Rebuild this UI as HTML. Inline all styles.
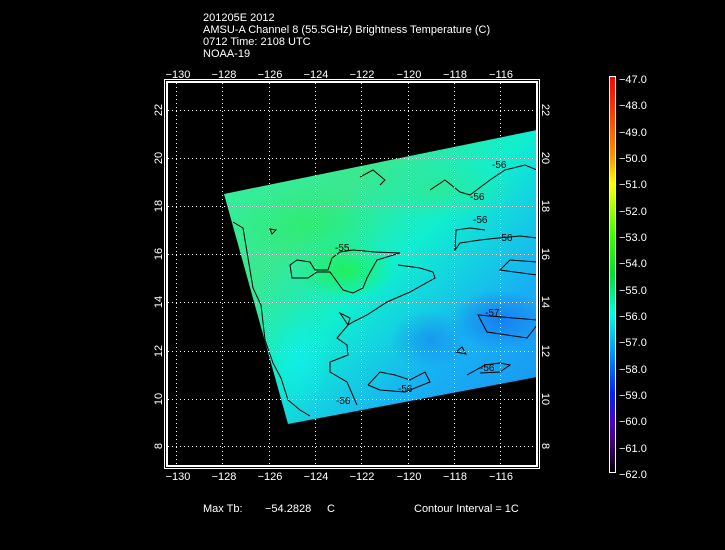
<!DOCTYPE html>
<html><head><style>
html,body{margin:0;padding:0;background:#000;}
body{width:725px;height:550px;overflow:hidden;position:relative;font-family:"Liberation Sans",sans-serif;color:#fff;}
.t{position:absolute;font-size:11px;line-height:12px;white-space:pre;}
</style></head><body>
<div class="t" style="left:203px;top:12px;">201205E 2012
AMSU-A Channel 8 (55.5GHz) Brightness Temperature (C)
0712 Time: 2108 UTC
NOAA-19</div>
<svg width="725" height="550" style="position:absolute;left:0;top:0" xmlns="http://www.w3.org/2000/svg">
<defs>
<linearGradient id="g" x1="0" y1="0" x2="1" y2="1" gradientUnits="objectBoundingBox">
<stop offset="0" stop-color="#30f0a0"/>
<stop offset="0.3" stop-color="#3ae890"/>
<stop offset="0.5" stop-color="#10eed0"/>
<stop offset="0.75" stop-color="#18b0f4"/>
<stop offset="1" stop-color="#1890f0"/>
</linearGradient>
<radialGradient id="r1"><stop offset="0" stop-color="#20f050" stop-opacity="0.9"/><stop offset="1" stop-color="#20f050" stop-opacity="0"/></radialGradient>
<radialGradient id="r2"><stop offset="0" stop-color="#1878f0" stop-opacity="0.9"/><stop offset="1" stop-color="#1878f0" stop-opacity="0"/></radialGradient>
<radialGradient id="r3"><stop offset="0" stop-color="#10f0f0" stop-opacity="0.9"/><stop offset="1" stop-color="#10f0f0" stop-opacity="0"/></radialGradient>
<radialGradient id="r4"><stop offset="0" stop-color="#30e890" stop-opacity="0.9"/><stop offset="1" stop-color="#30e890" stop-opacity="0"/></radialGradient>
<linearGradient id="cb" x1="0" y1="0" x2="0" y2="1">
<stop offset="0" stop-color="#ff0000"/>
<stop offset="0.1" stop-color="#ff4000"/>
<stop offset="0.2" stop-color="#ff9000"/>
<stop offset="0.27" stop-color="#ffff00"/>
<stop offset="0.4" stop-color="#40ff00"/>
<stop offset="0.5" stop-color="#00e030"/>
<stop offset="0.6" stop-color="#00ffe0"/>
<stop offset="0.7" stop-color="#0090ff"/>
<stop offset="0.8" stop-color="#0020ff"/>
<stop offset="0.88" stop-color="#5000c0"/>
<stop offset="0.95" stop-color="#300050"/>
<stop offset="1" stop-color="#000000"/>
</linearGradient>
<clipPath id="cp"><polygon points="224,194 537,130 537,377 288,424"/></clipPath>
</defs>
<polygon points="224,194 537,130 537,377 288,424" fill="url(#g)"/>
<g clip-path="url(#cp)">
<ellipse cx="345" cy="270" rx="50" ry="30" fill="url(#r1)"/>
<ellipse cx="310" cy="225" rx="80" ry="40" fill="url(#r1)" opacity="0.5"/>
<ellipse cx="440" cy="190" rx="80" ry="30" fill="url(#r4)" opacity="0.8"/>
<ellipse cx="500" cy="320" rx="50" ry="30" fill="url(#r2)"/>
<ellipse cx="430" cy="340" rx="40" ry="30" fill="url(#r2)" opacity="0.6"/>
<ellipse cx="300" cy="360" rx="30" ry="50" fill="url(#r3)" opacity="0.7"/>
<g fill="none" stroke="#000" stroke-width="1">
<polyline points="233,222 243,228 253,288 261,305 265,340 273,363 281,378 288,400 300,410 310,416"/>
<polygon points="290,265 297,260 310,262 315,270 328,270 332,258 340,252 353,250 375,252 400,253 377,260 367,278 363,288 353,293 343,290 330,272 317,272 308,278 292,278"/>
<polyline points="398,265 420,268 433,272 435,278 410,292 387,302 367,315 353,322 348,325 340,313 350,318 348,325 337,338 347,345 348,355 330,362 330,372 347,382 357,405"/>
<polyline points="537,238 520,236 498,238 480,240 460,243 455,250 456,230 470,228 485,230"/>
<polyline points="537,320 478,315 487,332 527,338 537,325"/>
<polyline points="537,262 510,260 500,270 537,275"/>
<polyline points="360,177 373,170 385,180 380,185"/>
<polyline points="430,190 445,180 460,192 470,195 490,180 505,170 525,165 537,170"/>
<polyline points="368,385 380,372 395,375 410,380 425,372 430,382 405,392 380,390 368,385"/>
<polyline points="467,375 485,365 500,363 510,365 500,372 480,373"/>
<polygon points="270,229 276,230 272,234"/>
<polygon points="456,352 462,347 466,354"/>
</g>
<g fill="#000" font-size="10" font-family="Liberation Sans,sans-serif">
<text x="335" y="251">-55</text><text x="498" y="241">-56</text><text x="470" y="200">-56</text>
<text x="473" y="223">-56</text><text x="485" y="316">-57</text><text x="398" y="392">-56</text>
<text x="480" y="371">-56</text><text x="336" y="404">-56</text><text x="492" y="168">-56</text>
</g>
</g>
<g stroke="#fff" stroke-width="1" stroke-dasharray="1,3">
<line x1="176.5" y1="83" x2="176.5" y2="466"/><line x1="222.5" y1="83" x2="222.5" y2="466"/>
<line x1="269.5" y1="83" x2="269.5" y2="466"/><line x1="315.5" y1="83" x2="315.5" y2="466"/>
<line x1="361.5" y1="83" x2="361.5" y2="466"/><line x1="408.5" y1="83" x2="408.5" y2="466"/>
<line x1="454.5" y1="83" x2="454.5" y2="466"/><line x1="500.5" y1="83" x2="500.5" y2="466"/>
<line x1="168" y1="110.5" x2="536" y2="110.5"/><line x1="168" y1="158.5" x2="536" y2="158.5"/>
<line x1="168" y1="206.5" x2="536" y2="206.5"/><line x1="168" y1="254.5" x2="536" y2="254.5"/>
<line x1="168" y1="302.5" x2="536" y2="302.5"/><line x1="168" y1="351.5" x2="536" y2="351.5"/>
<line x1="168" y1="399.5" x2="536" y2="399.5"/><line x1="168" y1="446.5" x2="536" y2="446.5"/>
</g>
<rect x="164.5" y="79.5" width="375" height="389" fill="none" stroke="#fff" stroke-width="1"/>
<rect x="167" y="82" width="370" height="384" fill="none" stroke="#fff" stroke-width="2"/>
<g fill="#fff" font-size="11" font-family="Liberation Sans,sans-serif" text-anchor="middle">
<text x="178" y="78">−130</text><text x="224" y="78">−128</text><text x="270" y="78">−126</text><text x="316" y="78">−124</text>
<text x="362" y="78">−122</text><text x="409" y="78">−120</text><text x="455" y="78">−118</text><text x="501" y="78">−116</text>
<text x="178" y="480">−130</text><text x="224" y="480">−128</text><text x="270" y="480">−126</text><text x="316" y="480">−124</text>
<text x="362" y="480">−122</text><text x="409" y="480">−120</text><text x="455" y="480">−118</text><text x="501" y="480">−116</text>
<text transform="translate(162,110) rotate(-90)">22</text><text transform="translate(162,158) rotate(-90)">20</text>
<text transform="translate(162,206) rotate(-90)">18</text><text transform="translate(162,254) rotate(-90)">16</text>
<text transform="translate(162,302) rotate(-90)">14</text><text transform="translate(162,351) rotate(-90)">12</text>
<text transform="translate(162,399) rotate(-90)">10</text><text transform="translate(162,446) rotate(-90)">8</text>
<text transform="translate(542,110) rotate(90)">22</text><text transform="translate(542,158) rotate(90)">20</text>
<text transform="translate(542,206) rotate(90)">18</text><text transform="translate(542,254) rotate(90)">16</text>
<text transform="translate(542,302) rotate(90)">14</text><text transform="translate(542,351) rotate(90)">12</text>
<text transform="translate(542,399) rotate(90)">10</text><text transform="translate(542,446) rotate(90)">8</text>
</g>
<rect x="609.5" y="76.5" width="6" height="396" fill="url(#cb)" stroke="#fff" stroke-width="1"/>
<g fill="#fff" font-size="11" font-family="Liberation Sans,sans-serif">
<text x="619" y="83">−47.0</text><text x="619" y="109">−48.0</text><text x="619" y="136">−49.0</text>
<text x="619" y="162">−50.0</text><text x="619" y="188">−51.0</text><text x="619" y="215">−52.0</text>
<text x="619" y="241">−53.0</text><text x="619" y="267">−54.0</text><text x="619" y="294">−55.0</text>
<text x="619" y="320">−56.0</text><text x="619" y="346">−57.0</text><text x="619" y="373">−58.0</text>
<text x="619" y="399">−59.0</text><text x="619" y="425">−60.0</text><text x="619" y="452">−61.0</text>
<text x="619" y="478">−62.0</text>
<text x="203" y="512">Max Tb:</text><text x="265" y="512">−54.2828</text><text x="327" y="512">C</text>
<text x="414" y="512">Contour Interval = 1C</text>
</g>
</svg>
</body></html>
